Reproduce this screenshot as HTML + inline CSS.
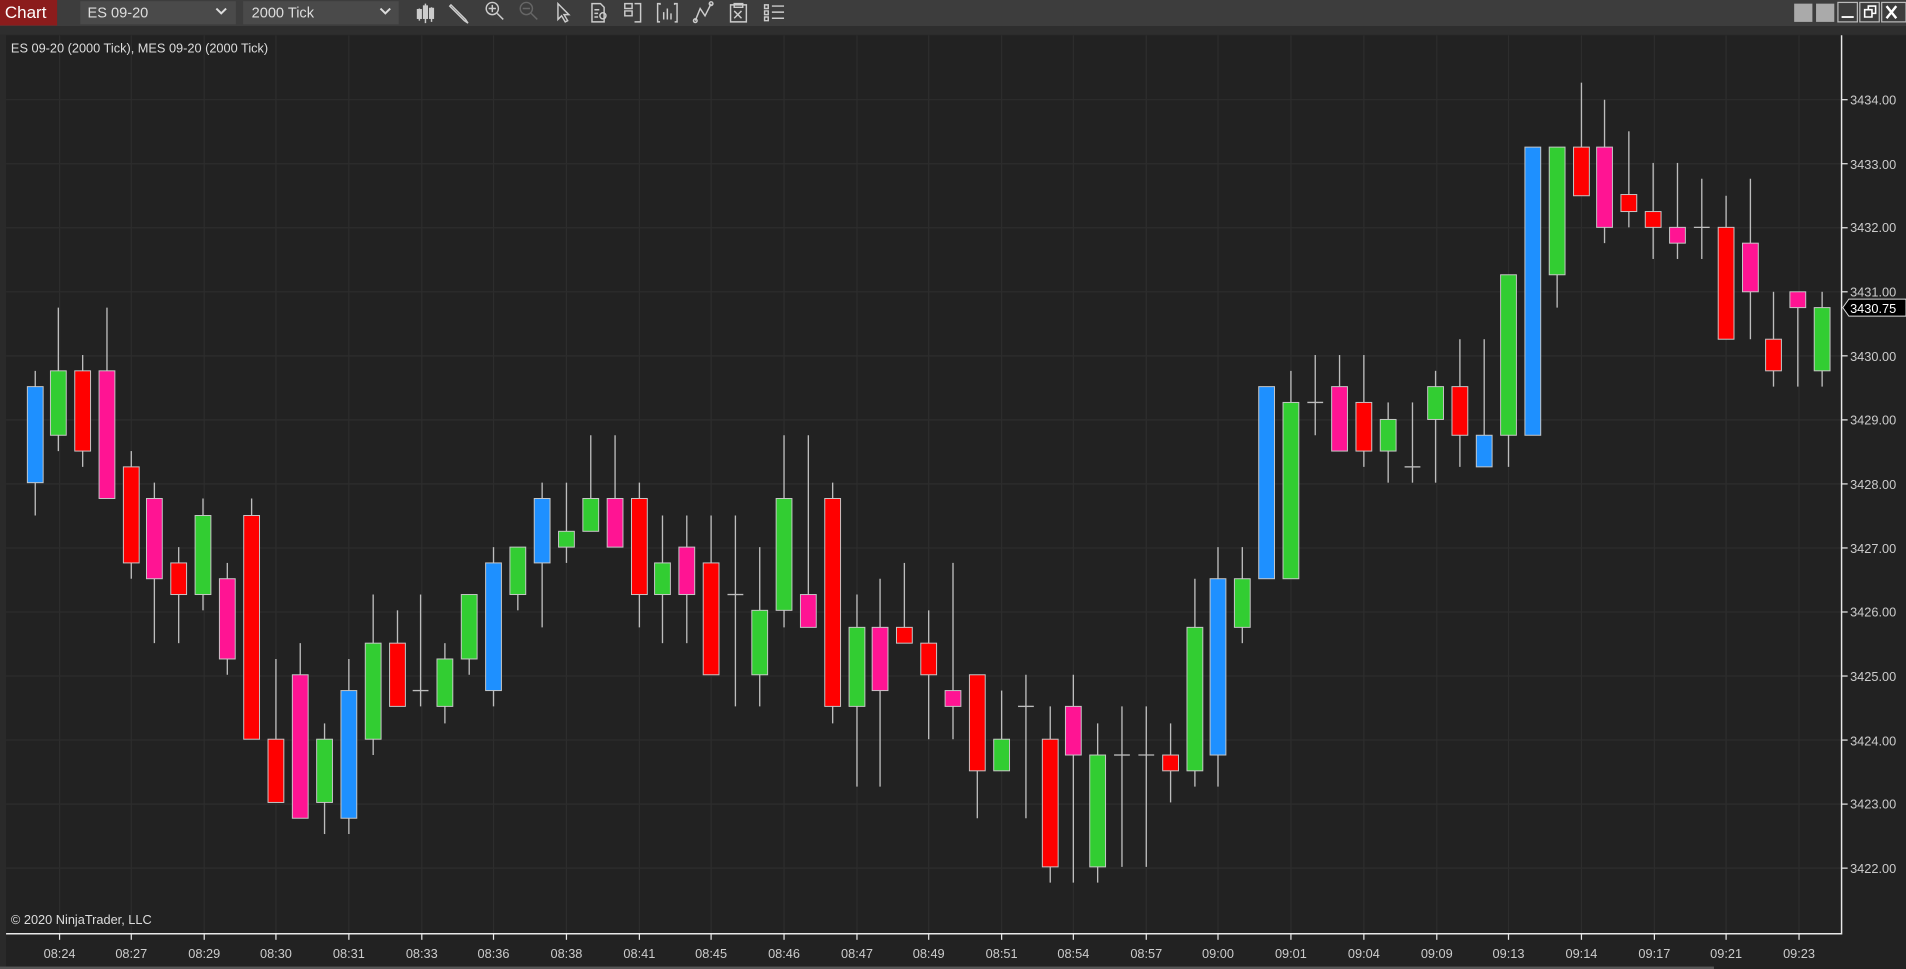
<!DOCTYPE html>
<html><head><meta charset="utf-8">
<style>
html,body{margin:0;padding:0;background:#222;width:1906px;height:969px;overflow:hidden}
svg{display:block}
text{font-family:"Liberation Sans",sans-serif}
</style></head><body>
<svg width="1906" height="969" viewBox="0 0 1568 797" preserveAspectRatio="none" xmlns="http://www.w3.org/2000/svg">
<rect x="0" y="0" width="1568" height="797" fill="#2a2a2a"/>
<rect x="0" y="0" width="1568" height="21.5" fill="#3d3d3d"/>
<rect x="0" y="21.5" width="1568" height="7" fill="#2e2e2e"/>
<rect x="0" y="0" width="47" height="21" fill="#8b1c1c"/>
<text x="4" y="15" font-size="14" fill="#fff">Chart</text>
<rect x="66" y="1" width="128" height="19" fill="#4a4a4a"/>
<text x="72" y="14.5" font-size="12" fill="#ddd">ES 09-20</text>
<path d="M178 7 l4 4 l4 -4" stroke="#ddd" stroke-width="1.6" fill="none"/>
<rect x="200" y="1" width="128" height="19" fill="#4a4a4a"/>
<text x="207" y="14.5" font-size="12" fill="#ddd">2000 Tick</text>
<path d="M313 7 l4 4 l4 -4" stroke="#ddd" stroke-width="1.6" fill="none"/>
<g stroke="#ccc" fill="none" stroke-width="1.2">
 <path d="M345 7v10M350 3v16M355 6v12"/><rect x="343.5" y="8" width="3" height="7" fill="#ccc"/><rect x="348.5" y="5" width="3" height="10" fill="#ccc"/><rect x="353.5" y="7" width="3" height="8" fill="#ccc"/>
 <path d="M371 4l12 12l2 3l-3 -2l-12 -12z"/>
 <circle cx="405" cy="7" r="5"/><path d="M402 7h6M405 4v6M409 11l5 5"/>
 <g stroke="#666"><circle cx="433" cy="7" r="5"/><path d="M430 7h6M437 11l5 5"/></g>
 <path d="M459 3v13l3 -3l3 5l2 -1l-3 -5h4z"/>
 <path d="M487 3h7l3 3v12h-10zM489 8h4M489 11h3M489 14h3"/><circle cx="496" cy="13" r="2.5"/>
 <path d="M514 3h6v4h-6zM514 9h6v4h-6zM522 3h5v15h-5"/>
 <path d="M543 4v-1h-2v15h2M555 4v-1h2v15h-2M546 16v-6M549 16v-9M552 16v-5"/>
 <path d="M572 17l4 -10l4 6l5 -10"/><circle cx="572" cy="17" r="1.5"/><circle cx="585" cy="3" r="1.5"/>
 <path d="M601 4h13v14h-13zM604 3h7v3h-7zM604 9l6 6M610 9l-6 6"/>
 <path d="M629 4h3v3h-3zM629 9h3v3h-3zM629 14h3v3h-3zM635 5h10M635 10h10M635 15h10"/>
</g>
<rect x="1476" y="3" width="15" height="15" fill="#aaa"/>
<rect x="1494" y="3" width="15" height="15" fill="#aaa"/>
<rect x="1512" y="2" width="16" height="16" fill="none" stroke="#bbb"/><path d="M1515 14h10" stroke="#fff" stroke-width="1.5"/>
<rect x="1530" y="2" width="16" height="16" fill="none" stroke="#bbb"/><path d="M1534 8h6v6h-6zM1537 8v-3h6v6h-3" stroke="#fff" stroke-width="1.3" fill="none"/>
<rect x="1548" y="2" width="20" height="16" fill="none" stroke="#bbb"/><path d="M1552 5l8 10M1560 5l-8 10" stroke="#fff" stroke-width="2"/>
<rect x="5" y="29" width="1563" height="768" fill="#222"/>
<g id="grid" stroke="#2d2d2d" stroke-width="1"></g>
<g id="candles"></g>
<path d="M1515 29V768H5" stroke="#e8e8e8" stroke-width="1.2" fill="none"/>
<text x="9" y="43" font-size="10.5" fill="#ddd">ES 09-20 (2000 Tick), MES 09-20 (2000 Tick)</text>
<text x="9" y="760" font-size="10.5" fill="#ddd">© 2020 NinjaTrader, LLC</text>
<g font-size="10.5" fill="#ccc">
<text x="1522" y="86">3434.00</text><text x="1522" y="139">3433.00</text><text x="1522" y="191">3432.00</text><text x="1522" y="244">3431.00</text>
<text x="1522" y="297">3430.00</text><text x="1522" y="349">3429.00</text><text x="1522" y="402">3428.00</text><text x="1522" y="455">3427.00</text>
<text x="1522" y="507">3426.00</text><text x="1522" y="560">3425.00</text><text x="1522" y="613">3424.00</text><text x="1522" y="665">3423.00</text>
<text x="1522" y="718">3422.00</text>
</g>
<path d="M1516 253l5 -7h47v14h-47z" fill="#000" stroke="#ddd" stroke-width="0.8"/>
<text x="1522" y="257.5" font-size="10.5" fill="#fff">3430.75</text>
<g font-size="10.5" fill="#ccc" text-anchor="middle">
<text x="49" y="788">08:24</text><text x="108" y="788">08:27</text><text x="168" y="788">08:29</text><text x="227" y="788">08:30</text>
<text x="287" y="788">08:31</text><text x="347" y="788">08:33</text><text x="406" y="788">08:36</text><text x="466" y="788">08:38</text>
<text x="526" y="788">08:41</text><text x="585" y="788">08:45</text><text x="645" y="788">08:46</text><text x="705" y="788">08:47</text>
<text x="764" y="788">08:49</text><text x="824" y="788">08:51</text><text x="883" y="788">08:54</text><text x="943" y="788">08:57</text>
<text x="1002" y="788">09:00</text><text x="1062" y="788">09:01</text><text x="1122" y="788">09:04</text><text x="1182" y="788">09:09</text>
<text x="1241" y="788">09:13</text><text x="1301" y="788">09:14</text><text x="1361" y="788">09:17</text><text x="1420" y="788">09:21</text>
<text x="1480" y="788">09:23</text>
</g>
<rect x="0" y="795" width="1410" height="2" fill="#555"/>
<g id="ticks" stroke="#e8e8e8" stroke-width="1"></g>
</svg>
<script>
var NS="http://www.w3.org/2000/svg";
function el(p,n,a){var e=document.createElementNS(NS,n);for(var k in a)e.setAttribute(k,a[k]);p.appendChild(e);return e;}
var g=document.getElementById('grid'),tk=document.getElementById('ticks');
var tx=[49,108,168,227,287,347,406,466,526,585,645,705,764,824,883,943,1002,1062,1122,1182,1241,1301,1361,1420,1480];
tx.forEach(function(x){el(g,'line',{x1:x,y1:29,x2:x,y2:768});el(tk,'line',{x1:x,y1:768,x2:x,y2:773});});
for(var i=0;i<13;i++){var y=82+52.67*i;el(g,'line',{x1:5,y1:y,x2:1515,y2:y});el(tk,'line',{x1:1515,y1:y,x2:1520,y2:y});}
var C={b:'#1e90ff',g:'#32cd32',r:'#ff0000',p:'#ff1493',d:null};
var d=[[29,'b',318,397,305,424],[48,'g',305,358,253,371],[68,'r',305,371,292,384],[88,'p',305,410,253,410],[108,'r',384,463,371,476],[127,'p',410,476,397,529],[147,'r',463,489,450,529],[167,'g',424,489,410,502],[187,'p',476,542,463,555],[207,'r',424,608,410,608],[227,'r',608,660,542,660],[247,'p',555,673,529,673],[267,'g',608,660,595,686],[287,'b',568,673,542,686],[307,'g',529,608,489,621],[327,'r',529,581,502,581],[346,'d',568,568,489,581],[366,'g',542,581,529,595],[386,'g',489,542,489,555],[406,'b',463,568,450,581],[426,'g',450,489,450,502],[446,'b',410,463,397,516],[466,'g',437,450,397,463],[486,'g',410,437,358,437],[506,'p',410,450,358,450],[526,'r',410,489,397,516],[545,'g',463,489,424,529],[565,'p',450,489,424,529],[585,'r',463,555,424,555],[605,'d',489,489,424,581],[625,'g',502,555,450,581],[645,'g',410,502,358,516],[665,'p',489,516,358,516],[685,'r',410,581,397,595],[705,'g',516,581,489,647],[724,'p',516,568,476,647],[744,'r',516,529,463,529],[764,'r',529,555,502,608],[784,'p',568,581,463,608],[804,'r',555,634,555,673],[824,'g',608,634,568,634],[844,'d',581,581,555,673],[864,'r',608,713,581,726],[883,'p',581,621,555,726],[903,'g',621,713,595,726],[923,'d',621,621,581,713],[943,'d',621,621,581,713],[963,'r',621,634,595,660],[983,'g',516,634,476,647],[1002,'b',476,621,450,647],[1022,'g',476,516,450,529],[1042,'b',318,476,318,476],[1062,'g',331,476,305,476],[1082,'d',331,331,292,358],[1102,'p',318,371,292,371],[1122,'r',331,371,292,384],[1142,'g',345,371,331,397],[1162,'d',384,384,331,397],[1181,'g',318,345,305,397],[1201,'r',318,358,279,384],[1221,'b',358,384,279,384],[1241,'g',226,358,226,384],[1261,'b',121,358,121,358],[1281,'g',121,226,121,253],[1301,'r',121,161,68,161],[1320,'p',121,187,82,200],[1340,'r',160,174,108,187],[1360,'r',174,187,134,213],[1380,'p',187,200,134,213],[1400,'d',187,187,147,213],[1420,'r',187,279,161,279],[1440,'p',200,240,147,279],[1459,'r',279,305,240,318],[1479,'p',240,253,240,318],[1499,'g',253,305,240,318]];
var cg=document.getElementById('candles');
d.forEach(function(c){var x=c[0];
 el(cg,'line',{x1:x,y1:c[4],x2:x,y2:c[5],stroke:'#bdbdbd','stroke-width':1.1});
 if(c[1]=='d'){el(cg,'line',{x1:x-6.5,y1:c[2],x2:x+6.5,y2:c[2],stroke:'#bdbdbd','stroke-width':1.1});}
 else el(cg,'rect',{x:x-6.5,y:c[2],width:13,height:c[3]-c[2],fill:C[c[1]],stroke:'#c8c8c8','stroke-width':0.8});
});
</script>
</body></html>
